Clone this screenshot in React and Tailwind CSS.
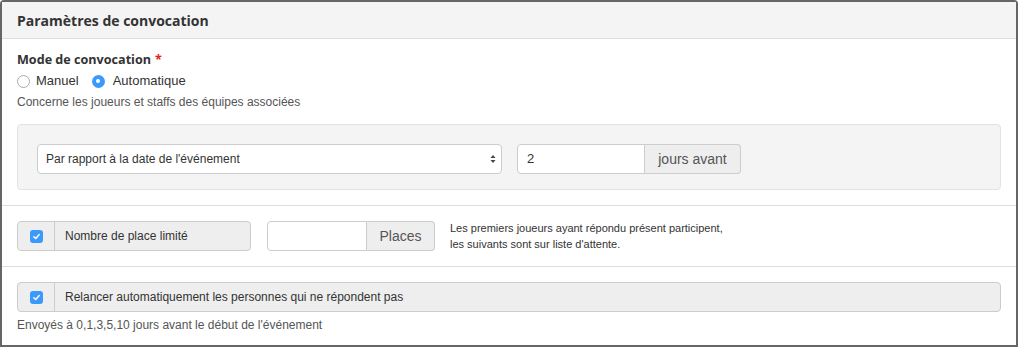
import React from "react";

const Check = () => (
  <span className="flex h-[13px] w-[13px] items-center justify-center rounded-[3px] bg-[#3b99fc]">
    <svg width="9" height="9" viewBox="0 0 10 10" fill="none">
      <path d="M2 5.2 L4.2 7.3 L8 2.8" stroke="#fff" strokeWidth="1.6" strokeLinecap="round" strokeLinejoin="round" />
    </svg>
  </span>
);

export default function App() {
  return (
    <div className="bg-white" style={{ fontFamily: '"Liberation Sans", Arial, sans-serif' }}>
      <div className="box-border h-[347px] w-[1018px] rounded-t-[4px] border-2 border-[#666] bg-white">
        <div className="flex h-[37px] items-center border-b border-[#ddd] bg-[#f4f4f4] px-[15px]">
          <span className="text-[14px] font-bold text-[#333]" style={{ fontFamily: '"Open Sans", sans-serif' }}>
            Paramètres de convocation
          </span>
        </div>
        <div className="px-[15px] pt-[12px]">
          <div className="flex h-[18px] items-center text-[12.6px] font-bold text-[#333]" style={{ fontFamily: '"Open Sans", sans-serif' }}>
            Mode de convocation <span className="ml-[4px] text-[#e02020]">*</span>
          </div>
          <div className="mt-[3px] flex h-[18px] items-center text-[13px] text-[#333]">
            <span className="box-border h-[13px] w-[13px] rounded-full border border-[#aaa] bg-white" />
            <span className="ml-[6px]">Manuel</span>
            <span className="ml-[13px] flex h-[13px] w-[13px] items-center justify-center rounded-full bg-[#3b99fc]">
              <span className="h-[4px] w-[4px] rounded-full bg-white" />
            </span>
            <span className="ml-[8px]">Automatique</span>
          </div>
          <div className="mt-[4px] flex h-[16px] items-center text-[12px] text-[#555]">
            Concerne les joueurs et staffs des équipes associées
          </div>
          <div className="mt-[14px] box-border h-[66px] rounded-[4px] border border-[#e3e3e3] bg-[#f4f4f4] px-[19px] pt-[19px]">
            <div className="flex items-center">
              <div className="box-border flex h-[30px] w-[465px] items-center justify-between rounded-[4px] border border-[#ccc] bg-white pl-[8px] pr-[5px] text-[12px] text-[#333]">
                <span>Par rapport à la date de l'événement</span>
                <svg width="6" height="10" viewBox="0 0 6 10">
                  <path d="M3 1 L5.5 4 L0.5 4 Z" fill="#444" />
                  <path d="M3 9 L5.5 6 L0.5 6 Z" fill="#444" />
                </svg>
              </div>
              <div className="ml-[15px] flex h-[30px]">
                <div className="box-border flex w-[128px] items-center rounded-l-[4px] border border-[#ccc] bg-white pl-[9px] text-[13px] text-[#333]">2</div>
                <div className="box-border flex w-[96px] items-center justify-center rounded-r-[4px] border border-l-0 border-[#ccc] bg-[#eee] text-[14px] text-[#555]">
                  jours avant
                </div>
              </div>
            </div>
          </div>
        </div>
        <div className="mt-[15px] border-t border-[#ddd] px-[15px] pt-[14px]">
          <div className="flex items-center">
            <div className="box-border flex h-[30px] w-[234px] rounded-[4px] border border-[#ccc] bg-[#eee]">
              <div className="flex w-[37px] items-center justify-center border-r border-[#ccc]">
                <Check />
              </div>
              <div className="flex items-center pl-[10px] text-[12px] text-[#333]">Nombre de place limité</div>
            </div>
            <div className="ml-[16px] flex h-[30px]">
              <div className="box-border w-[100px] rounded-l-[4px] border border-[#ccc] bg-white" />
              <div className="box-border flex w-[68px] items-center justify-center rounded-r-[4px] border border-l-0 border-[#ccc] bg-[#eee] text-[14px] text-[#555]">
                Places
              </div>
            </div>
            <div className="ml-[15px] text-[11px] leading-[16px] text-[#333]">
              <div>Les premiers joueurs ayant répondu présent participent,</div>
              <div>les suivants sont sur liste d'attente.</div>
            </div>
          </div>
        </div>
        <div className="mt-[14px] border-t border-[#ddd] px-[15px] pt-[15px]">
          <div className="box-border flex h-[30px] w-[984px] rounded-[4px] border border-[#ccc] bg-[#eee]">
            <div className="flex w-[37px] items-center justify-center border-r border-[#ccc]">
              <Check />
            </div>
            <div className="flex items-center pl-[10px] text-[12px] text-[#333]">
              Relancer automatiquement les personnes qui ne répondent pas
            </div>
          </div>
          <div className="mt-[5px] flex h-[16px] items-center text-[12px] text-[#555]">
            Envoyés à 0,1,3,5,10 jours avant le début de l'événement
          </div>
        </div>
      </div>
    </div>
  );
}
